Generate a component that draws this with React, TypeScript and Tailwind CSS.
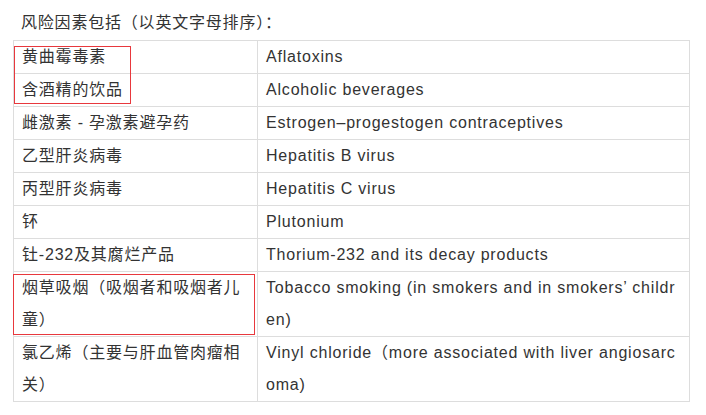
import React from "react";

const rows: [React.ReactNode, React.ReactNode][] = [
  ["黄曲霉毒素", "Aflatoxins"],
  ["含酒精的饮品", "Alcoholic beverages"],
  ["雌激素 - 孕激素避孕药", "Estrogen–progestogen contraceptives"],
  ["乙型肝炎病毒", "Hepatitis B virus"],
  ["丙型肝炎病毒", "Hepatitis C virus"],
  ["钚", "Plutonium"],
  ["钍-232及其腐烂产品", "Thorium-232 and its decay products"],
  [
    <>烟草吸烟（吸烟者和吸烟者儿<br />童）</>,
    <>Tobacco smoking (in smokers and in smokers’ childr<br />en)</>,
  ],
  [
    <>氯乙烯（主要与肝血管肉瘤相<br />关）</>,
    <>Vinyl chloride（more associated with liver angiosarc<br />oma)</>,
  ],
];

export default function App() {
  return (
    <div
      className="relative w-[706px] h-[415px] bg-white text-[#333] text-[16px] tracking-[0.8px]"
      style={{ fontFamily: '"Liberation Sans", "Noto Sans CJK SC", sans-serif' }}
    >
      <div className="pt-[7px] pl-[13px]">
        <p className="pl-2 leading-[32px] whitespace-nowrap">风险因素包括（以英文字母排序）：</p>
        <table className="mt-px border-collapse w-[677px] table-fixed">
          <colgroup>
            <col className="w-[244px]" />
            <col />
          </colgroup>
          <tbody>
            {rows.map((r, i) => (
              <tr key={i}>
                <td className="border border-[#dddddd] px-2 py-0 leading-[32px] align-top whitespace-nowrap overflow-hidden">
                  {r[0]}
                </td>
                <td className="border border-[#dddddd] px-2 py-0 leading-[32px] align-top whitespace-nowrap overflow-hidden">
                  {r[1]}
                </td>
              </tr>
            ))}
          </tbody>
        </table>
      </div>
      <div className="absolute left-[14px] top-[46px] w-[117px] h-[58px] border border-[#e8383d]" />
      <div className="absolute left-[13px] top-[274px] w-[242px] h-[61px] border border-[#e8383d]" />
    </div>
  );
}
